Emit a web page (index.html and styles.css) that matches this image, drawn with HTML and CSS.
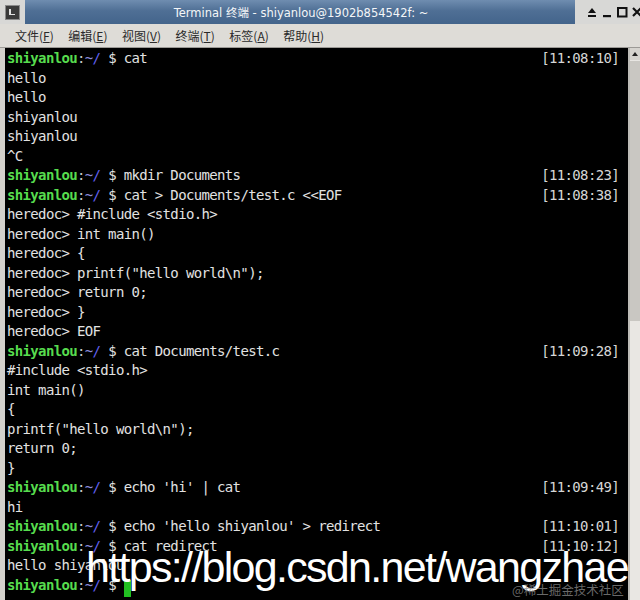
FILE: index.html
```html
<!DOCTYPE html>
<html>
<head>
<meta charset="utf-8">
<link rel="stylesheet" href="styles.css">
</head>
<body>
<div class="window">
  <div class="titlebar">
    <div class="tb-left">
      <div class="app-icon"><span class="app-prompt"></span></div>
    </div>
    <div class="tb-title">Terminal 终端 - shiyanlou@1902b854542f: ~</div>
    <div class="tb-buttons">
      <svg class="btn" width="12" height="12" viewBox="0 0 12 12"><path d="M2 7 L6 2 L10 7 Z" fill="#111"/><rect x="2" y="9" width="8" height="2" fill="#111"/></svg>
      <svg class="btn" width="12" height="12" viewBox="0 0 12 12"><rect x="2" y="9" width="8" height="2.2" fill="#111"/></svg>
      <svg class="btn" width="12" height="12" viewBox="0 0 12 12"><rect x="2" y="2" width="8.5" height="8.5" fill="none" stroke="#111" stroke-width="2"/></svg>
      <svg class="btn" width="12" height="12" viewBox="0 0 12 12"><path d="M2 2 L10 10 M10 2 L2 10" stroke="#111" stroke-width="2.2"/></svg>
    </div>
  </div>
  <div class="menubar">
    <span class="menu-item">文件(<u>F</u>)</span>
    <span class="menu-item">编辑(<u>E</u>)</span>
    <span class="menu-item">视图(<u>V</u>)</span>
    <span class="menu-item">终端(<u>T</u>)</span>
    <span class="menu-item">标签(<u>A</u>)</span>
    <span class="menu-item">帮助(<u>H</u>)</span>
  </div>
  <div class="body">
    <div class="left-edge"></div>
    <div class="term">
      <div class="line"><span><span class="pu">shiyanlou</span><span class="pc">:</span><span class="pt">~</span><span class="pd">/</span> $ cat</span><span class="ts">[11:08:10]</span></div>
      <div class="line">hello</div>
      <div class="line">hello</div>
      <div class="line">shiyanlou</div>
      <div class="line">shiyanlou</div>
      <div class="line">^C</div>
      <div class="line"><span><span class="pu">shiyanlou</span><span class="pc">:</span><span class="pt">~</span><span class="pd">/</span> $ mkdir Documents</span><span class="ts">[11:08:23]</span></div>
      <div class="line"><span><span class="pu">shiyanlou</span><span class="pc">:</span><span class="pt">~</span><span class="pd">/</span> $ cat &gt; Documents/test.c &lt;&lt;EOF</span><span class="ts">[11:08:38]</span></div>
      <div class="line">heredoc&gt; #include &lt;stdio.h&gt;</div>
      <div class="line">heredoc&gt; int main()</div>
      <div class="line">heredoc&gt; {</div>
      <div class="line">heredoc&gt; printf("hello world\n");</div>
      <div class="line">heredoc&gt; return 0;</div>
      <div class="line">heredoc&gt; }</div>
      <div class="line">heredoc&gt; EOF</div>
      <div class="line"><span><span class="pu">shiyanlou</span><span class="pc">:</span><span class="pt">~</span><span class="pd">/</span> $ cat Documents/test.c</span><span class="ts">[11:09:28]</span></div>
      <div class="line">#include &lt;stdio.h&gt;</div>
      <div class="line">int main()</div>
      <div class="line">{</div>
      <div class="line">printf("hello world\n");</div>
      <div class="line">return 0;</div>
      <div class="line">}</div>
      <div class="line"><span><span class="pu">shiyanlou</span><span class="pc">:</span><span class="pt">~</span><span class="pd">/</span> $ echo 'hi' | cat</span><span class="ts">[11:09:49]</span></div>
      <div class="line">hi</div>
      <div class="line"><span><span class="pu">shiyanlou</span><span class="pc">:</span><span class="pt">~</span><span class="pd">/</span> $ echo 'hello shiyanlou' &gt; redirect</span><span class="ts">[11:10:01]</span></div>
      <div class="line"><span><span class="pu">shiyanlou</span><span class="pc">:</span><span class="pt">~</span><span class="pd">/</span> $ cat redirect</span><span class="ts">[11:10:12]</span></div>
      <div class="line">hello shiyanlou</div>
      <div class="line"><span><span class="pu">shiyanlou</span><span class="pc">:</span><span class="pt">~</span><span class="pd">/</span> $ <span class="cursor"> </span></span></div>
    </div>
    <div class="scrollbar">
      <div class="sb-arrow"></div>
      <div class="sb-thumb"></div>
      <div class="sb-track"></div>
    </div>
  </div>
  <div class="wm-url">https://blog.csdn.net/wangzhae</div>
  <div class="wm-small">@稀土掘金技术社区</div>
</div>
</body>
</html>
```
FILE: styles.css
```css
html, body {
  margin: 0;
  padding: 0;
  background: #d9d7d2;
}
.window {
  position: relative;
  width: 640px;
  height: 600px;
  overflow: hidden;
  display: flex;
  flex-direction: column;
}
.titlebar {
  height: 24px;
  display: flex;
  flex-shrink: 0;
  background: #d8d8d6;
}
.tb-left {
  width: 25px;
  display: flex;
  align-items: center;
  justify-content: center;
}
.app-icon {
  width: 15px;
  height: 15px;
  background: #3a3a3a;
  border: 1px solid #8a8a8a;
  box-sizing: border-box;
  position: relative;
}
.app-prompt {
  position: absolute;
  left: 3px;
  top: 3px;
  width: 2px;
  height: 6px;
  background: #e0e0e0;
}
.app-prompt::after {
  content: "";
  position: absolute;
  left: 2px;
  top: 5px;
  width: 4px;
  height: 1px;
  background: #e0e0e0;
}
.tb-title {
  flex: 1;
  background: linear-gradient(to bottom, #6f8db0 0%, #4f6f95 45%, #43648b 100%);
  color: #f4f6f8;
  font-family: "DejaVu Sans", "Noto Sans CJK SC", sans-serif;
  font-size: 11.5px;
  display: flex;
  align-items: center;
  justify-content: center;
  padding-left: 2px;
}
.tb-buttons {
  width: 65px;
  display: flex;
  align-items: center;
  gap: 3px;
  padding-left: 11px;
  box-sizing: border-box;
}
.btn {
  flex-shrink: 0;
}
.menubar {
  height: 23px;
  flex-shrink: 0;
  display: flex;
  align-items: center;
  gap: 14.5px;
  padding-left: 15px;
  background: #dedcd7;
  font-family: "Noto Sans CJK SC", sans-serif;
  font-size: 12px;
  color: #2a2a2a;
  border-bottom: 1px solid #9c9a96;
}
.menu-item u {
  text-underline-offset: 1px;
}
.body {
  flex: 1;
  display: flex;
}
.left-edge {
  width: 5px;
  background: #d3d1cc;
}
.term {
  flex: 1;
  background: #000;
  padding: 1px 9px 0 2px;
  font-family: "DejaVu Sans Mono", monospace;
  font-size: 14px;
  letter-spacing: -0.65px;
  color: #e2e2e2;
}
.line {
  height: 19.5px;
  line-height: 19.5px;
  display: flex;
  justify-content: space-between;
  white-space: pre;
}
.pu {
  color: #57dc4e;
  font-weight: bold;
}
.pc {
  color: #c8c8c8;
}
.pt {
  color: #8a8ad8;
}
.pd {
  color: #6060f0;
}
.ts {
  color: #d6d6d6;
}
.cursor {
  display: inline-block;
  width: 7px;
  height: 17px;
  vertical-align: -4px;
  background: #22c022;
}
.scrollbar {
  width: 10px;
  display: flex;
  flex-direction: column;
  border-left: 2px solid #bdbbb6;
}
.sb-arrow {
  height: 12px;
  background: #d6d4cf;
  position: relative;
}
.sb-arrow::after {
  content: "";
  position: absolute;
  left: 2px;
  top: 4px;
  border-left: 3px solid transparent;
  border-right: 3px solid transparent;
  border-bottom: 4px solid #222;
}
.sb-thumb {
  height: 260px;
  background: #c9c7c2;
  border-top: 1px solid #e8e6e2;
}
.sb-track {
  flex: 1;
  background: #e9e7e3;
}
.wm-url {
  position: absolute;
  left: 86px;
  top: 538px;
  font-family: "Liberation Sans", Arial, sans-serif;
  font-size: 43px;
  letter-spacing: -1.7px;
  color: #ffffff;
  line-height: 58px;
  white-space: nowrap;
}
.wm-small {
  position: absolute;
  left: 512px;
  top: 580px;
  font-family: "Noto Sans CJK SC", sans-serif;
  font-size: 12.5px;
  color: rgba(140, 140, 140, 0.75);
  white-space: nowrap;
}
```
